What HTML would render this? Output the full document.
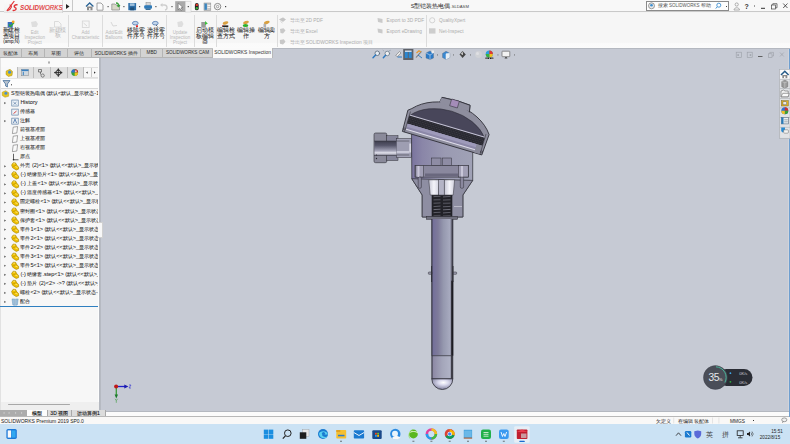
<!DOCTYPE html><html><head><meta charset="utf-8"><style>
*{margin:0;padding:0;box-sizing:border-box}
html,body{width:790px;height:444px;overflow:hidden;background:#f4f4f4;font-family:"Liberation Sans",sans-serif;position:relative;color:#333}
.a{position:absolute}
.t{position:absolute;white-space:nowrap}
#title{left:0;top:0;width:790px;height:12px;background:#f8f8f8;border-bottom:1px solid #c9c9c9}
#ribbon{left:0;top:13px;width:790px;height:35px;background:linear-gradient(#f6f6f6 0,#f6f6f6 84%,#fafafa 86%,#fbfbfb 100%)}
.sep{position:absolute;width:1px;background:#dcdcdc}
.rb{position:absolute;text-align:center;font-size:4.5px;line-height:5.8px;color:#1a1a1a;white-space:nowrap;-webkit-text-stroke:0.05px #333}
.rb.g{color:#b8b8b8;font-size:4.5px;line-height:5.1px;-webkit-text-stroke:0}
.rs{position:absolute;font-size:4.8px;line-height:5px;color:#acacac;white-space:nowrap}
#tabs{left:0;top:48px;width:273px;height:9.5px;background:#d3d3d3;border-top:1px solid #c0c0c0}
.tab{position:absolute;top:0;height:8.5px;border-right:1px solid #b4b4b4;font-size:4.65px;line-height:8.5px;text-align:center;color:#2a2a2a;white-space:nowrap;overflow:hidden}
#left{left:0;top:57.5px;width:98.8px;height:353px;background:#f7f7f7;border-left:1px solid #e2e2e2;border-right:1.2px solid #fdfdfd}
#split{left:98.8px;top:57.5px;width:2.4px;height:353px;background:linear-gradient(90deg,#b4b8c0 0,#b4b8c0 70%,#c0c4cc 100%)}
#vp{left:101px;top:48px;width:689px;height:362.5px;background:#c6cad4}
#btabs{left:0;top:410.5px;width:790px;height:6.3px;background:#fbfbfb;border-bottom:1px solid #b8b8b8;border-top:0.6px solid #b4b8c0}
#status{left:0;top:417px;width:790px;height:7px;background:#f9f8f7}
#taskbar{left:0;top:424px;width:790px;height:20px;background:#cbe2f4}
.tr{position:absolute;left:0;height:9px;font-size:5.5px;line-height:9px;color:#1a1a1a;white-space:nowrap;-webkit-text-stroke:0.05px #333}
</style></head><body>
<div id="title" class="a"></div>
<div class="a" style="left:4px;top:0;width:59px;height:14px;background:linear-gradient(#fafafa 0,#f4f4f4 70%,#dcdcdc 100%);border-right:1px solid #d6d6d6"></div>
<svg class="a" style="left:0;top:0" width="22" height="13">
<path d="M6.9 10.9 L14.3 1" stroke="#e03438" stroke-width="1.25" fill="none"/>
<path d="M9.6 5 C12.6 5 11.8 9.6 7.2 10.8" stroke="#e03438" stroke-width="1.15" fill="none"/>
<path d="M17.6 4.9 C15 4.2 12.8 6.2 15.2 7.6 C17.2 8.6 15.6 11 12.6 10.4" stroke="#e03438" stroke-width="1.35" fill="none"/>
</svg>
<div class="t" style="left:19.8px;top:4.4px;font-size:8.1px;line-height:8.5px;font-weight:bold;font-style:italic;color:#e23a3c;transform:scaleX(0.77);transform-origin:0 0">SOLID<span style="font-weight:normal;-webkit-text-stroke:0.2px #e23a3c">WORKS</span></div>
<svg class="a" style="left:66px;top:4px" width="4" height="5"><path d="M0 0 L3.5 2.5 L0 5Z" fill="#222"/></svg>
<div class="a" style="left:72px;top:0;width:1px;height:12px;background:#c8c8c8"></div>

<svg class="a" style="left:0;top:0" width="790" height="13">
<!-- home -->
<path d="M86 6.5 L89.7 3 L93.4 6.5" stroke="#2a6496" stroke-width="1.3" fill="none"/>
<rect x="87" y="6.5" width="5.5" height="3.8" fill="#8a8a8a"/><rect x="89" y="8" width="1.5" height="2.3" fill="#eee"/>
<!-- new doc -->
<path d="M97 3 L101 3 L103 5 L103 10.2 L97 10.2Z" fill="#fafafa" stroke="#8c8c8c" stroke-width="0.8"/>
<rect x="107.5" y="6" width="1.2" height="1.2" fill="#555"/>
<!-- open -->
<path d="M111.8 4 L115 4 L116 5 L119.5 5 L119.5 10 L111.8 10Z" fill="#d8d8c8" stroke="#888" stroke-width="0.7"/>
<path d="M116 3 C118 3 119 4 118.5 6.5 L117 5.5 M118.5 6.5 L120 5.3" stroke="#3aa03a" stroke-width="1.3" fill="none"/>
<rect x="123.3" y="6" width="1.2" height="1.2" fill="#555"/>
<!-- save -->
<rect x="128.3" y="3" width="7.8" height="7.3" rx="0.6" fill="#2d6ea8"/>
<rect x="129.8" y="3.3" width="4.8" height="2.6" fill="#9fc0dc"/><rect x="130.2" y="7.4" width="4" height="2.9" fill="#1f4f7a"/>
<rect x="139" y="6" width="1.2" height="1.2" fill="#555"/>
<!-- print -->
<rect x="146" y="2.6" width="4.2" height="2.6" fill="#d8d8d8" stroke="#888" stroke-width="0.5"/>
<rect x="144.2" y="5.2" width="7.8" height="3.6" rx="1" fill="#2f7ab8"/>
<rect x="145.6" y="8.4" width="5" height="1.6" fill="#3a6f9a"/>
<rect x="155.3" y="6" width="1.2" height="1.2" fill="#555"/>
<!-- undo -->
<path d="M161 5 L164.5 5 C167.5 5 168 9.5 165 10" stroke="#cfcfcf" stroke-width="1.4" fill="none"/>
<path d="M160 5 L162.5 3 L162.5 7Z" fill="#cfcfcf"/>
<rect x="171.4" y="6" width="1.2" height="1.2" fill="#555"/>
<!-- select box -->
<rect x="175.2" y="1.2" width="10.3" height="10.8" fill="#a9a9a9"/>
<rect x="185.5" y="1.2" width="5.5" height="10.8" fill="#f4f4f4" stroke="#c8c8c8" stroke-width="0.5"/>
<path d="M178.2 3 L178.2 9.8 L179.8 8.3 L181.2 10.6 L182.2 10 L181 7.8 L183 7.6Z" fill="#fff" stroke="#555" stroke-width="0.5"/>
<rect x="187.7" y="6" width="1.2" height="1.2" fill="#444"/>
<!-- traffic -->
<rect x="194.9" y="3" width="3.8" height="7.3" rx="1.9" fill="#222"/>
<circle cx="196.8" cy="4.9" r="1.2" fill="#e03a2a"/><circle cx="196.8" cy="8.3" r="1.2" fill="#3cb03c"/>
<!-- list -->
<rect x="204" y="3" width="6.8" height="7.3" fill="#c8c8c8" stroke="#888" stroke-width="0.5"/>
<rect x="204.5" y="3.5" width="2.4" height="6.3" fill="#3a86c0"/>
<rect x="207.5" y="5" width="2.8" height="0.8" fill="#fff"/><rect x="207.5" y="7.2" width="2.8" height="0.8" fill="#fff"/>
<!-- options -->
<circle cx="217.6" cy="6.6" r="3.2" fill="none" stroke="#8c8c8c" stroke-width="1"/>
<circle cx="217.6" cy="6.6" r="1.2" fill="none" stroke="#8c8c8c" stroke-width="0.8"/>
<rect x="225" y="6" width="1.2" height="1.2" fill="#444"/>
</svg>
<div class="t" style="left:410.8px;top:2.8px;font-size:5.55px;line-height:7px;color:#2a2a2a">S型铠装热电偶<span style="font-size:4.2px;color:#444">.SLDASM</span></div>
<div class="a" style="left:646px;top:1px;width:83px;height:9.6px;background:#fdfdfd;border:1px solid #8a8a8a"></div>
<svg class="a" style="left:0;top:0" width="790" height="13"><circle cx="651.5" cy="5.8" r="3" fill="#e8e8e8" stroke="#777" stroke-width="0.7"/><circle cx="651.5" cy="5.2" r="1.3" fill="#3d8fd0"/><circle cx="718.8" cy="5.2" r="2" fill="none" stroke="#3d8fd0" stroke-width="0.9"/><path d="M717.3 6.8 L715.8 8.5" stroke="#3d8fd0" stroke-width="1"/><rect x="726" y="6" width="1" height="1" fill="#444"/><circle cx="736.7" cy="4.5" r="1.6" fill="none" stroke="#999" stroke-width="0.8"/><path d="M734 10 C734 7 739.5 7 739.5 10Z" fill="none" stroke="#999" stroke-width="0.8"/><rect x="754" y="5.5" width="1" height="1" fill="#444"/><rect x="761" y="7.8" width="4" height="1" fill="#333"/><rect x="771.5" y="5" width="4" height="4" fill="none" stroke="#444" stroke-width="0.7"/><path d="M772.8 5 L772.8 3.7 L777 3.7 L777 7.8 L775.5 7.8" fill="none" stroke="#444" stroke-width="0.7"/><path d="M783.2 3.5 L787.5 8 M787.5 3.5 L783.2 8" stroke="#333" stroke-width="0.8"/></svg>
<div class="t" style="left:657.5px;top:2.2px;font-size:5.2px;line-height:7px;color:#555">搜索 <span style="font-size:4.5px">SOLIDWORKS</span> 帮助</div>
<div class="t" style="left:744.5px;top:1.5px;font-size:7px;line-height:9px;font-weight:bold;color:#333">?</div>
<div id="ribbon" class="a"></div>
<div class="sep" style="left:68.4px;top:15px;height:32px"></div>
<div class="sep" style="left:102.3px;top:15px;height:32px"></div>
<div class="sep" style="left:166.4px;top:15px;height:32px"></div>
<div class="sep" style="left:194.0px;top:15px;height:32px"></div>
<div class="sep" style="left:215.5px;top:15px;height:32px"></div>
<div class="sep" style="left:276.8px;top:15px;height:32px"></div>
<div class="sep" style="left:426.3px;top:15px;height:32px"></div>
<div class="rb" style="left:-3.7px;top:27.8px;width:30px"><span style="font-size:5.7px;letter-spacing:-0.25px;">新建检</span><br><span style="font-size:5.7px;letter-spacing:-0.25px;">查项目</span><br>(amp;N)</div>
<div class="rb g" style="left:19.7px;top:29.6px;width:30px">Edit<br>Inspection<br>Project</div>
<div class="rb g" style="left:42.6px;top:27.8px;width:30px"><span style="font-size:5.7px;letter-spacing:-0.25px;">新建模</span><br><span style="font-size:5.7px;letter-spacing:-0.25px;">板</span></div>
<div class="rb g" style="left:70.5px;top:29.6px;width:30px">Add<br>Characteristic</div>
<div class="rb g" style="left:99.0px;top:29.6px;width:30px">Add/Edit<br>Balloons</div>
<div class="rb" style="left:120.7px;top:27.8px;width:30px"><span style="font-size:5.7px;letter-spacing:-0.25px;">移除零</span><br><span style="font-size:5.7px;letter-spacing:-0.25px;">件序号</span></div>
<div class="rb" style="left:140.8px;top:27.8px;width:30px"><span style="font-size:5.7px;letter-spacing:-0.25px;">选择零</span><br><span style="font-size:5.7px;letter-spacing:-0.25px;">件序号</span></div>
<div class="rb g" style="left:165.1px;top:29.6px;width:30px">Update<br>Inspection<br>Project</div>
<div class="rb" style="left:189.7px;top:27.8px;width:30px"><span style="font-size:5.7px;letter-spacing:-0.25px;">启动模</span><br><span style="font-size:5.7px;letter-spacing:-0.25px;">板编辑</span><br><span style="font-size:5.7px;letter-spacing:-0.25px;">器</span></div>
<div class="rb" style="left:211.1px;top:27.8px;width:30px"><span style="font-size:5.7px;letter-spacing:-0.25px;">编辑检</span><br><span style="font-size:5.7px;letter-spacing:-0.25px;">查方式</span></div>
<div class="rb" style="left:231.1px;top:27.8px;width:30px"><span style="font-size:5.7px;letter-spacing:-0.25px;">编辑操</span><br><span style="font-size:5.7px;letter-spacing:-0.25px;">作</span></div>
<div class="rb" style="left:251.4px;top:27.8px;width:30px"><span style="font-size:5.7px;letter-spacing:-0.25px;">编辑卖</span><br><span style="font-size:5.7px;letter-spacing:-0.25px;">方</span></div>
<svg class="a" style="left:0;top:0" width="790" height="48">
<!-- new inspection -->
<rect x="7.7" y="22" width="5" height="5.5" fill="#3a6cc0"/><path d="M9 24.5 L10.6 26.5 L14 22.6" stroke="#2fa83a" stroke-width="1.4" fill="none"/><circle cx="13.2" cy="21.8" r="1.4" fill="#f0a020"/>
<!-- edit proj gray -->
<path d="M31 22 L36 21 L38 24 L36.5 27 L32 27Z" fill="#dedede"/>
<path d="M54.5 21.5 L58.5 21.5 L61 24 L61 27 L54.5 27Z" fill="none" stroke="#d4d4d4" stroke-width="0.8"/>
<rect x="82.3" y="21" width="6.8" height="6.5" fill="none" stroke="#d4d4d4" stroke-width="0.8"/><path d="M83.5 23 L87 26" stroke="#d0d0d0" stroke-width="0.8"/>
<path d="M111 22 L113 26 L117 25.5" stroke="#d8d8d8" stroke-width="1" fill="none"/>
<!-- remove balloon -->
<ellipse cx="135.3" cy="23.2" rx="2.9" ry="1.8" fill="#c4d6ea" stroke="#3a68a8" stroke-width="0.7"/><rect x="136" y="25.3" width="2" height="1.8" fill="#e82020"/>
<ellipse cx="155.3" cy="23.2" rx="2.9" ry="1.8" fill="#c4d6ea" stroke="#3a68a8" stroke-width="0.7"/><path d="M156 25 L157.5 26.5" stroke="#333" stroke-width="0.7"/>
<path d="M177.3 22 L182 21 L183.5 24 L182 27 L178 27Z" fill="#dedede"/>
<!-- template editor -->
<rect x="201.3" y="22" width="4.5" height="5.5" fill="#9a9a9a"/><path d="M205 21 L207.8 23.5 L205 25Z" fill="#3cc03c"/>
<!-- edit inspection method -->
<ellipse cx="225.5" cy="23" rx="3" ry="1.5" fill="#d9a040" transform="rotate(-20 225.5 23)"/><rect x="222.3" y="25.4" width="6" height="1.6" fill="#222"/><rect x="222" y="25" width="1" height="1" fill="#e06060"/>
<ellipse cx="246" cy="22.5" rx="3" ry="1.5" fill="#d9a040" transform="rotate(-20 246 22.5)"/><ellipse cx="245.5" cy="25.5" rx="2.8" ry="1.6" fill="#2db02d"/>
<ellipse cx="266.8" cy="22.5" rx="3" ry="1.5" fill="#d9a040" transform="rotate(-20 266.8 22.5)"/><rect x="263.5" y="23.8" width="2.6" height="3.5" fill="#b0b0b0"/>
<!-- small gray icons -->
<path d="M279.5 19.5 L283 17.8 L285.5 19.5 L283 21.5 Z M280.5 21.5 L282.5 23" fill="#c4c4c4" stroke="#c0c0c0" stroke-width="0.6"/>
<path d="M280 29 L283.5 28.3 L285.5 30.5 L283 33.5 L280.5 33 Z" fill="#c8c8c8"/>
<path d="M279.8 40 L283.8 39.2 L285.5 41.8 L283 44.5 L280 43.8 Z" fill="#c8c8c8"/>
<path d="M377.5 18 L382.5 19 L382.5 23 L378 22Z" fill="#cacaca"/>
<path d="M377.5 28.5 L382.5 29.5 L382.5 33.5 L378 32.5Z" fill="#cacaca"/>
<circle cx="432.2" cy="20.3" r="2.6" fill="none" stroke="#d4d4d4" stroke-width="1"/>
<rect x="429" y="28.3" width="6.5" height="5.3" fill="#cdcdcd"/>
</svg>
<div class="rs" style="left:289.5px;top:18.1px"><span style="font-size:5.0px;">导出至</span> 2D PDF</div>
<div class="rs" style="left:289.5px;top:28.9px"><span style="font-size:5.0px;">导出至</span> Excel</div>
<div class="rs" style="left:289.5px;top:39.6px"><span style="font-size:5.0px;">导出至</span> SOLIDWORKS Inspection <span style="font-size:5.0px;">项目</span></div>
<div class="rs" style="left:386.5px;top:18.1px">Export to 3D PDF</div>
<div class="rs" style="left:386.5px;top:28.9px">Export eDrawing</div>
<div class="rs" style="left:439px;top:18.1px">QualityXpert</div>
<div class="rs" style="left:439px;top:28.9px">Net-Inspect</div>
<div id="vp" class="a"></div>
<div class="a" style="left:787.9px;top:48px;width:1px;height:362.5px;background:#d0d4dc"></div>
<div class="a" style="left:788.9px;top:48px;width:1.1px;height:362.5px;background:#6f9fd0"></div>
<div class="a" style="left:273px;top:48px;width:517px;height:1px;background:linear-gradient(#acb0b8,#bcc0c8)"></div>
<div id="tabs" class="a">
<div class="tab" style="left:0.0px;width:22.3px"><span style="font-size:5.0px;">装配体</span></div>
<div class="tab" style="left:22.3px;width:22.7px"><span style="font-size:5.0px;">布局</span></div>
<div class="tab" style="left:45.0px;width:22.8px"><span style="font-size:5.0px;">草图</span></div>
<div class="tab" style="left:67.8px;width:24.0px"><span style="font-size:5.0px;">评估</span></div>
<div class="tab" style="left:91.8px;width:49.7px">SOLIDWORKS <span style="font-size:5.0px;">插件</span></div>
<div class="tab" style="left:141.5px;width:21.5px">MBD</div>
<div class="tab" style="left:163.0px;width:50.0px">SOLIDWORKS CAM</div>
</div>
<div class="a" style="left:0;top:56.8px;width:213px;height:0.8px;background:#b4b4b4"></div>
<div class="a" style="left:213px;top:48px;width:60.2px;height:9.5px;background:#fafafa;border-right:1px solid #b8b8b8;font-size:4.9px;line-height:9.5px;text-align:center;color:#333;white-space:nowrap">SOLIDWORKS Inspection</div>
<div id="left" class="a"></div>
<div id="split" class="a"></div>
<div class="a" style="left:1px;top:57.5px;width:97px;height:9.3px;background:#fafafa"></div>
<div class="a" style="left:47.8px;top:61.3px;width:2.6px;height:2.6px;border-radius:50%;border:0.6px solid #b0b0b0"></div>
<div class="a" style="left:1px;top:66.5px;width:97px;height:0.8px;background:#cfcfcf"></div>
<div class="a" style="left:1px;top:67.2px;width:97px;height:10.8px;background:#e0e0e0"></div>
<div class="a" style="left:1px;top:67.2px;width:16px;height:11px;background:#f9f9f9"></div>
<div class="a" style="left:17.1px;top:67.2px;width:0.8px;height:10.8px;background:#bdbdbd"></div>
<div class="a" style="left:32.9px;top:67.2px;width:0.8px;height:10.8px;background:#bdbdbd"></div>
<div class="a" style="left:49.9px;top:67.2px;width:0.8px;height:10.8px;background:#bdbdbd"></div>
<div class="a" style="left:66.6px;top:67.2px;width:0.8px;height:10.8px;background:#bdbdbd"></div>
<div class="a" style="left:82.8px;top:67.2px;width:0.8px;height:10.8px;background:#bdbdbd"></div>
<div class="a" style="left:83.5px;top:68px;width:14px;height:9px;background:#f8f8f8"></div>
<div class="a" style="left:90.6px;top:68px;width:0.6px;height:9px;background:#c8c8c8"></div>
<svg class="a" style="left:0;top:0" width="100" height="100">
<path d="M6.2 71 L10 69.3 L12.5 71.5 L12 75.5 L8.5 76.5 L6 74.5Z" fill="#e6c21e" stroke="#a48a10" stroke-width="0.5"/>
<circle cx="9.6" cy="72.2" r="1.6" fill="#4a90d0"/>
<rect x="21.5" y="69.5" width="7" height="6.3" fill="#cfd8e0" stroke="#777" stroke-width="0.4"/>
<rect x="21.5" y="69.5" width="7" height="1.6" fill="#3a80c0"/>
<rect x="22.8" y="71.8" width="1" height="3.5" fill="#3a80c0"/>
<path d="M38.5 69.5 L41.5 69.5 L41.5 72 L38.5 72Z M40.5 72 L40.5 74.5 M41.5 74.5 A1.6 1.6 0 1 0 41.6 74.4" fill="none" stroke="#555" stroke-width="0.7"/>
<circle cx="58.3" cy="72.6" r="2.4" fill="none" stroke="#222" stroke-width="0.9"/>
<path d="M58.3 69 L58.3 76.2 M54.7 72.6 L61.9 72.6" stroke="#222" stroke-width="0.9"/>
<path d="M57.4 69.6 L58.3 68.6 L59.2 69.6 M57.4 75.6 L58.3 76.6 L59.2 75.6 M55.3 71.7 L54.3 72.6 L55.3 73.5 M61.3 71.7 L62.3 72.6 L61.3 73.5" fill="#222" stroke="#222" stroke-width="0.5"/>
<circle cx="74.7" cy="72.6" r="3.4" fill="#3aa03a"/>
<path d="M74.7 72.6 L74.7 69.2 A3.4 3.4 0 0 1 78.1 72.6Z" fill="#d02020"/>
<path d="M74.7 72.6 L78.1 72.6 A3.4 3.4 0 0 1 74.7 76Z" fill="#f0c020"/>
<path d="M74.7 72.6 L71.3 72.6 A3.4 3.4 0 0 1 74.7 69.2Z" fill="#3070d0"/>
<circle cx="75.8" cy="71.2" r="1" fill="#fff" opacity="0.7"/>
<path d="M87.7 71.5 L86 72.6 L87.7 73.7Z" fill="#333"/>
<path d="M94 71.5 L95.7 72.6 L94 73.7Z" fill="#333"/>
<!-- filter -->
<path d="M3 80.6 L10 80.6 L7.4 84 L7.4 87 L5.6 86 L5.6 84Z" fill="#b8c4d0" stroke="#2f5f90" stroke-width="0.6"/>
<rect x="11" y="84.3" width="1" height="1" fill="#333"/>
</svg>
<div class="a" style="left:1px;top:78px;width:97px;height:10.5px;background:#fdfdfd;border-bottom:0.6px solid #d8d8d8;border-top:0.6px solid #e6e6e6"></div>
<svg class="a" style="left:0;top:0" width="100" height="100"><path d="M3 80.6 L10 80.6 L7.4 84 L7.4 87 L5.6 86 L5.6 84Z" fill="#b8c4d0" stroke="#2f5f90" stroke-width="0.7"/><rect x="11" y="84.3" width="1" height="1" fill="#333"/></svg>
<div class="a" style="left:0;top:88.5px;width:98px;height:320px;overflow:hidden">
<div class="tr" style="left:11.0px;top:0.50px">S<span style="font-size:5.0px;">型铠装热电偶</span>  (<span style="font-size:5.0px;">默认</span>&lt;<span style="font-size:5.0px;">默认</span>_<span style="font-size:5.0px;">显示状态</span>-1&gt;)</div>
<div class="tr" style="left:20.4px;top:9.54px">History</div>
<div class="tr" style="left:20.4px;top:18.58px"><span style="font-size:5.0px;">传感器</span></div>
<div class="tr" style="left:20.4px;top:27.62px"><span style="font-size:5.0px;">注解</span></div>
<div class="tr" style="left:20.4px;top:36.66px"><span style="font-size:5.0px;">前视基准面</span></div>
<div class="tr" style="left:20.4px;top:45.70px"><span style="font-size:5.0px;">上视基准面</span></div>
<div class="tr" style="left:20.4px;top:54.74px"><span style="font-size:5.0px;">右视基准面</span></div>
<div class="tr" style="left:20.4px;top:63.78px"><span style="font-size:5.0px;">原点</span></div>
<div class="tr" style="left:20.4px;top:72.82px"><span style="font-size:5.0px;">外壳</span> (2)&lt;1&gt; (<span style="font-size:5.0px;">默认</span>&lt;&lt;<span style="font-size:5.0px;">默认</span>&gt;_<span style="font-size:5.0px;">显示状态</span>-1&gt;)</div>
<div class="tr" style="left:20.4px;top:81.86px">(-) <span style="font-size:5.0px;">绝缘垫片</span>&lt;1&gt; (<span style="font-size:5.0px;">默认</span>&lt;&lt;<span style="font-size:5.0px;">默认</span>&gt;_<span style="font-size:5.0px;">显示状态</span>-1&gt;)</div>
<div class="tr" style="left:20.4px;top:90.90px">(-) <span style="font-size:5.0px;">上盖</span>&lt;1&gt; (<span style="font-size:5.0px;">默认</span>&lt;&lt;<span style="font-size:5.0px;">默认</span>&gt;_<span style="font-size:5.0px;">显示状态</span>-1&gt;)</div>
<div class="tr" style="left:20.4px;top:99.94px">(-) <span style="font-size:5.0px;">温度传感器</span>&lt;1&gt; (<span style="font-size:5.0px;">默认</span>&lt;&lt;<span style="font-size:5.0px;">默认</span>&gt;_<span style="font-size:5.0px;">显示状态</span>-1&gt;)</div>
<div class="tr" style="left:20.4px;top:108.98px"><span style="font-size:5.0px;">固定螺栓</span>&lt;1&gt; (<span style="font-size:5.0px;">默认</span>&lt;&lt;<span style="font-size:5.0px;">默认</span>&gt;_<span style="font-size:5.0px;">显示状态</span>-1&gt;)</div>
<div class="tr" style="left:20.4px;top:118.02px"><span style="font-size:5.0px;">密封圈</span>&lt;1&gt; (<span style="font-size:5.0px;">默认</span>&lt;&lt;<span style="font-size:5.0px;">默认</span>&gt;_<span style="font-size:5.0px;">显示状态</span>-1&gt;)</div>
<div class="tr" style="left:20.4px;top:127.06px"><span style="font-size:5.0px;">保护套</span>&lt;1&gt; (<span style="font-size:5.0px;">默认</span>&lt;&lt;<span style="font-size:5.0px;">默认</span>&gt;_<span style="font-size:5.0px;">显示状态</span>-1&gt;)</div>
<div class="tr" style="left:20.4px;top:136.10px"><span style="font-size:5.0px;">零件</span>1&lt;1&gt; (<span style="font-size:5.0px;">默认</span>&lt;&lt;<span style="font-size:5.0px;">默认</span>&gt;_<span style="font-size:5.0px;">显示状态</span>-1&gt;)</div>
<div class="tr" style="left:20.4px;top:145.14px"><span style="font-size:5.0px;">零件</span>2&lt;1&gt; (<span style="font-size:5.0px;">默认</span>&lt;&lt;<span style="font-size:5.0px;">默认</span>&gt;_<span style="font-size:5.0px;">显示状态</span>-1&gt;)</div>
<div class="tr" style="left:20.4px;top:154.18px"><span style="font-size:5.0px;">零件</span>2&lt;2&gt; (<span style="font-size:5.0px;">默认</span>&lt;&lt;<span style="font-size:5.0px;">默认</span>&gt;_<span style="font-size:5.0px;">显示状态</span>-1&gt;)</div>
<div class="tr" style="left:20.4px;top:163.22px"><span style="font-size:5.0px;">零件</span>3&lt;1&gt; (<span style="font-size:5.0px;">默认</span>&lt;&lt;<span style="font-size:5.0px;">默认</span>&gt;_<span style="font-size:5.0px;">显示状态</span>-1&gt;)</div>
<div class="tr" style="left:20.4px;top:172.26px"><span style="font-size:5.0px;">零件</span>5&lt;1&gt; (<span style="font-size:5.0px;">默认</span>&lt;&lt;<span style="font-size:5.0px;">默认</span>&gt;_<span style="font-size:5.0px;">显示状态</span>-1&gt;)</div>
<div class="tr" style="left:20.4px;top:181.30px">(-) <span style="font-size:5.0px;">绝缘套</span>.step&lt;1&gt; (<span style="font-size:5.0px;">默认</span>&lt;&lt;<span style="font-size:5.0px;">默认</span>&gt;_<span style="font-size:5.0px;">显示状态</span>-1&gt;)</div>
<div class="tr" style="left:20.4px;top:190.34px">(-) <span style="font-size:5.0px;">垫片</span> (2)&lt;2&gt; -&gt;? (<span style="font-size:5.0px;">默认</span>&lt;&lt;<span style="font-size:5.0px;">默认</span>&gt;_<span style="font-size:5.0px;">显示状态</span>-1&gt;)</div>
<div class="tr" style="left:20.4px;top:199.38px"><span style="font-size:5.0px;">螺栓</span>&lt;2&gt; (<span style="font-size:5.0px;">默认</span>&lt;&lt;<span style="font-size:5.0px;">默认</span>&gt;_<span style="font-size:5.0px;">显示状态</span>-1&gt;)</div>
<div class="tr" style="left:20.4px;top:208.42px"><span style="font-size:5.0px;">配合</span></div>
<svg class="a" style="left:0;top:0" width="98" height="320"><path d="M2.2 3.20 L5.6 1.70 L8.8 3.70 L8.6 7.30 L5 8.30 L2.2 6.50 Z" fill="#e8c420" stroke="#a08a10" stroke-width="0.4"/><circle cx="5.9" cy="4.20" r="1.5" fill="#4a90d0"/><path d="M4.3 12.94 L6 14.04 L4.3 15.14 Z" fill="#444"/><rect x="11.8" y="11.04" width="6.4" height="6" fill="#eef4fa" stroke="#4a6f98" stroke-width="0.6"/><path d="M13.3 13.04 L16.5 15.54 M13.5 15.54 L16.5 13.04" stroke="#4a6f98" stroke-width="0.6"/><rect x="11.8" y="20.08" width="6.4" height="6" fill="#eef2f6" stroke="#4a6f98" stroke-width="0.6"/><path d="M13.5 24.58 L16.5 22.08" stroke="#d03030" stroke-width="0.9"/><path d="M4.3 31.02 L6 32.12 L4.3 33.22 Z" fill="#444"/><rect x="11.8" y="29.12" width="6.4" height="6" fill="#eef2f6" stroke="#4a6f98" stroke-width="0.6"/><path d="M13.4 34.12 L15 30.12 L16.6 34.12" stroke="#2a5a9a" stroke-width="0.7" fill="none"/><path d="M13.2 38.16 L17.6 37.56 L16.8 43.96 L12.4 44.56 Z" fill="#fafafa" stroke="#555" stroke-width="0.5"/><path d="M13.2 47.20 L17.6 46.60 L16.8 53.00 L12.4 53.60 Z" fill="#fafafa" stroke="#555" stroke-width="0.5"/><path d="M13.2 56.24 L17.6 55.64 L16.8 62.04 L12.4 62.64 Z" fill="#fafafa" stroke="#555" stroke-width="0.5"/><path d="M13.5 64.78 L13.5 70.78 L18.5 70.78" stroke="#222" stroke-width="0.7" fill="none"/><circle cx="13.5" cy="70.78" r="0.8" fill="#222"/><path d="M4.3 76.22 L6 77.32 L4.3 78.42 Z" fill="#444"/><path d="M11.6 76.02 L13.2 73.72 L15.6 73.92 L16.6 76.02 L18.6 77.92 L18.6 80.12 L16.2 81.02 L12.6 78.72 Z" fill="#f0c000" stroke="#a08000" stroke-width="0.6" stroke-linejoin="round"/><path d="M13.3 74.72 L15 74.72 M15.2 77.52 L17.6 78.52" stroke="#fff0a0" stroke-width="0.7"/><path d="M13 77.52 L16.6 76.12" stroke="#a08000" stroke-width="0.45"/><path d="M4.3 85.26 L6 86.36 L4.3 87.46 Z" fill="#444"/><path d="M11.6 85.06 L13.2 82.76 L15.6 82.96 L16.6 85.06 L18.6 86.96 L18.6 89.16 L16.2 90.06 L12.6 87.76 Z" fill="#f0c000" stroke="#a08000" stroke-width="0.6" stroke-linejoin="round"/><path d="M13.3 83.76 L15 83.76 M15.2 86.56 L17.6 87.56" stroke="#fff0a0" stroke-width="0.7"/><path d="M13 86.56 L16.6 85.16" stroke="#a08000" stroke-width="0.45"/><path d="M4.3 94.30 L6 95.40 L4.3 96.50 Z" fill="#444"/><path d="M11.6 94.10 L13.2 91.80 L15.6 92.00 L16.6 94.10 L18.6 96.00 L18.6 98.20 L16.2 99.10 L12.6 96.80 Z" fill="#f0c000" stroke="#a08000" stroke-width="0.6" stroke-linejoin="round"/><path d="M13.3 92.80 L15 92.80 M15.2 95.60 L17.6 96.60" stroke="#fff0a0" stroke-width="0.7"/><path d="M13 95.60 L16.6 94.20" stroke="#a08000" stroke-width="0.45"/><path d="M4.3 103.34 L6 104.44 L4.3 105.54 Z" fill="#444"/><path d="M11.6 103.14 L13.2 100.84 L15.6 101.04 L16.6 103.14 L18.6 105.04 L18.6 107.24 L16.2 108.14 L12.6 105.84 Z" fill="#f0c000" stroke="#a08000" stroke-width="0.6" stroke-linejoin="round"/><path d="M13.3 101.84 L15 101.84 M15.2 104.64 L17.6 105.64" stroke="#fff0a0" stroke-width="0.7"/><path d="M13 104.64 L16.6 103.24" stroke="#a08000" stroke-width="0.45"/><path d="M4.3 112.38 L6 113.48 L4.3 114.58 Z" fill="#444"/><path d="M11.6 112.18 L13.2 109.88 L15.6 110.08 L16.6 112.18 L18.6 114.08 L18.6 116.28 L16.2 117.18 L12.6 114.88 Z" fill="#f0c000" stroke="#a08000" stroke-width="0.6" stroke-linejoin="round"/><path d="M13.3 110.88 L15 110.88 M15.2 113.68 L17.6 114.68" stroke="#fff0a0" stroke-width="0.7"/><path d="M13 113.68 L16.6 112.28" stroke="#a08000" stroke-width="0.45"/><path d="M4.3 121.42 L6 122.52 L4.3 123.62 Z" fill="#444"/><path d="M11.6 121.22 L13.2 118.92 L15.6 119.12 L16.6 121.22 L18.6 123.12 L18.6 125.32 L16.2 126.22 L12.6 123.92 Z" fill="#f0c000" stroke="#a08000" stroke-width="0.6" stroke-linejoin="round"/><path d="M13.3 119.92 L15 119.92 M15.2 122.72 L17.6 123.72" stroke="#fff0a0" stroke-width="0.7"/><path d="M13 122.72 L16.6 121.32" stroke="#a08000" stroke-width="0.45"/><path d="M4.3 130.46 L6 131.56 L4.3 132.66 Z" fill="#444"/><path d="M11.6 130.26 L13.2 127.96 L15.6 128.16 L16.6 130.26 L18.6 132.16 L18.6 134.36 L16.2 135.26 L12.6 132.96 Z" fill="#f0c000" stroke="#a08000" stroke-width="0.6" stroke-linejoin="round"/><path d="M13.3 128.96 L15 128.96 M15.2 131.76 L17.6 132.76" stroke="#fff0a0" stroke-width="0.7"/><path d="M13 131.76 L16.6 130.36" stroke="#a08000" stroke-width="0.45"/><path d="M4.3 139.50 L6 140.60 L4.3 141.70 Z" fill="#444"/><path d="M11.6 139.30 L13.2 137.00 L15.6 137.20 L16.6 139.30 L18.6 141.20 L18.6 143.40 L16.2 144.30 L12.6 142.00 Z" fill="#f0c000" stroke="#a08000" stroke-width="0.6" stroke-linejoin="round"/><path d="M13.3 138.00 L15 138.00 M15.2 140.80 L17.6 141.80" stroke="#fff0a0" stroke-width="0.7"/><path d="M13 140.80 L16.6 139.40" stroke="#a08000" stroke-width="0.45"/><path d="M4.3 148.54 L6 149.64 L4.3 150.74 Z" fill="#444"/><path d="M11.6 148.34 L13.2 146.04 L15.6 146.24 L16.6 148.34 L18.6 150.24 L18.6 152.44 L16.2 153.34 L12.6 151.04 Z" fill="#f0c000" stroke="#a08000" stroke-width="0.6" stroke-linejoin="round"/><path d="M13.3 147.04 L15 147.04 M15.2 149.84 L17.6 150.84" stroke="#fff0a0" stroke-width="0.7"/><path d="M13 149.84 L16.6 148.44" stroke="#a08000" stroke-width="0.45"/><path d="M4.3 157.58 L6 158.68 L4.3 159.78 Z" fill="#444"/><path d="M11.6 157.38 L13.2 155.08 L15.6 155.28 L16.6 157.38 L18.6 159.28 L18.6 161.48 L16.2 162.38 L12.6 160.08 Z" fill="#f0c000" stroke="#a08000" stroke-width="0.6" stroke-linejoin="round"/><path d="M13.3 156.08 L15 156.08 M15.2 158.88 L17.6 159.88" stroke="#fff0a0" stroke-width="0.7"/><path d="M13 158.88 L16.6 157.48" stroke="#a08000" stroke-width="0.45"/><path d="M4.3 166.62 L6 167.72 L4.3 168.82 Z" fill="#444"/><path d="M11.6 166.42 L13.2 164.12 L15.6 164.32 L16.6 166.42 L18.6 168.32 L18.6 170.52 L16.2 171.42 L12.6 169.12 Z" fill="#f0c000" stroke="#a08000" stroke-width="0.6" stroke-linejoin="round"/><path d="M13.3 165.12 L15 165.12 M15.2 167.92 L17.6 168.92" stroke="#fff0a0" stroke-width="0.7"/><path d="M13 167.92 L16.6 166.52" stroke="#a08000" stroke-width="0.45"/><path d="M4.3 175.66 L6 176.76 L4.3 177.86 Z" fill="#444"/><path d="M11.6 175.46 L13.2 173.16 L15.6 173.36 L16.6 175.46 L18.6 177.36 L18.6 179.56 L16.2 180.46 L12.6 178.16 Z" fill="#f0c000" stroke="#a08000" stroke-width="0.6" stroke-linejoin="round"/><path d="M13.3 174.16 L15 174.16 M15.2 176.96 L17.6 177.96" stroke="#fff0a0" stroke-width="0.7"/><path d="M13 176.96 L16.6 175.56" stroke="#a08000" stroke-width="0.45"/><path d="M4.3 184.70 L6 185.80 L4.3 186.90 Z" fill="#444"/><path d="M11.6 184.50 L13.2 182.20 L15.6 182.40 L16.6 184.50 L18.6 186.40 L18.6 188.60 L16.2 189.50 L12.6 187.20 Z" fill="#f0c000" stroke="#a08000" stroke-width="0.6" stroke-linejoin="round"/><path d="M13.3 183.20 L15 183.20 M15.2 186.00 L17.6 187.00" stroke="#fff0a0" stroke-width="0.7"/><path d="M13 186.00 L16.6 184.60" stroke="#a08000" stroke-width="0.45"/><path d="M4.3 193.74 L6 194.84 L4.3 195.94 Z" fill="#444"/><path d="M11.6 193.54 L13.2 191.24 L15.6 191.44 L16.6 193.54 L18.6 195.44 L18.6 197.64 L16.2 198.54 L12.6 196.24 Z" fill="#f0c000" stroke="#a08000" stroke-width="0.6" stroke-linejoin="round"/><path d="M13.3 192.24 L15 192.24 M15.2 195.04 L17.6 196.04" stroke="#fff0a0" stroke-width="0.7"/><path d="M13 195.04 L16.6 193.64" stroke="#a08000" stroke-width="0.45"/><path d="M4.3 202.78 L6 203.88 L4.3 204.98 Z" fill="#444"/><path d="M11.6 202.58 L13.2 200.28 L15.6 200.48 L16.6 202.58 L18.6 204.48 L18.6 206.68 L16.2 207.58 L12.6 205.28 Z" fill="#f0c000" stroke="#a08000" stroke-width="0.6" stroke-linejoin="round"/><path d="M13.3 201.28 L15 201.28 M15.2 204.08 L17.6 205.08" stroke="#fff0a0" stroke-width="0.7"/><path d="M13 204.08 L16.6 202.68" stroke="#a08000" stroke-width="0.45"/><path d="M4.3 211.82 L6 212.92 L4.3 214.02 Z" fill="#444"/><path d="M12 209.92 L14.6 209.92 L14.6 216.42 L12.8 215.92 Z M15.6 209.92 L18.2 209.92 L17.4 215.92 L15.6 216.42 Z" fill="#9cc0dc" stroke="#5a88b0" stroke-width="0.4"/></svg>
</div>
<div class="a" style="left:0;top:305.8px;width:98px;height:1.4px;background:#2f7fc0"></div>
<div class="a" style="left:98px;top:221.5px;width:5px;height:16px;background:#f8f8f8;border:0.5px solid #d0d0d0;border-left:none"></div>
<div class="a" style="left:1px;top:402.3px;width:97.8px;height:7.6px;background:#efefef"></div>
<div class="a" style="left:7.7px;top:404px;width:62.6px;height:1.2px;background:#a8a8a8;border-radius:1px"></div>
<svg class="a" style="left:0;top:0" width="790" height="444">
<g stroke-linecap="round">
<circle cx="377.3" cy="53.3" r="2.3" fill="#e8eef4" stroke="#5a6a7a" stroke-width="0.8"/><path d="M375.6 55 L373 57.8" stroke="#2a78c0" stroke-width="1.4"/>
<circle cx="387.3" cy="53.5" r="2.3" fill="#f0f0f0" stroke="#6a7a8a" stroke-width="0.8"/><path d="M385.6 55.2 L383.3 57.8" stroke="#2a78c0" stroke-width="1.4"/>
<path d="M389 50.8 L390.5 50.3 M383.8 51 L383 50.3" stroke="#7a8a9a" stroke-width="0.5"/>
<path d="M396 55 L399.5 51.5 L401 53 L397.5 56.5Z" fill="#e8e8e8" stroke="#666" stroke-width="0.5"/><path d="M401.5 57 L398 57" stroke="#2a78c0" stroke-width="1.2"/>
</g>
<rect x="403.2" y="49" width="10.2" height="11" fill="#5e6168"/>
<rect x="404.8" y="51.2" width="3" height="6.8" fill="#2a86d0"/><rect x="408.7" y="51.8" width="3" height="6.2" fill="#2a86d0"/><rect x="405" y="50.5" width="6.6" height="1.5" fill="#c8d8e8"/>
<path d="M416 57.5 L421.5 51.5" stroke="#777" stroke-width="1.1"/><path d="M416.5 53 L419 50.8 L421 52" stroke="#e89a30" stroke-width="1.3" fill="none"/><path d="M418 55 L422 58" stroke="#2a78c0" stroke-width="0.9"/>
<path d="M426 53 L430 51 L433.5 53 L433.5 58 L430 59.5 L426 58Z" fill="#2a7ac8" stroke="#5a6a80" stroke-width="0.4"/><path d="M426 53 L430 55 L433.5 53 M430 55 L430 59.5" stroke="#d8e4f0" stroke-width="0.6" fill="none"/><rect x="431.5" y="50.5" width="2.5" height="2.5" fill="#eaeaea"/>
<rect x="437" y="54.5" width="0.9" height="0.9" fill="#555"/>
<path d="M442.5 53.5 L446 51.3 L449.8 53.3 L449.8 57.5 L446 59.5 L442.5 57.5Z" fill="#3a88d0" stroke="#5a6a80" stroke-width="0.4"/><path d="M446 53.8 L449.8 53.3 M446 53.8 L446 59.5" stroke="#fff" stroke-width="0.5" fill="none"/><path d="M446 53.8 L449.8 53.3 L449.8 57.5 L446 59.5Z" fill="#e8eef4"/>
<rect x="453" y="54.5" width="0.9" height="0.9" fill="#555"/>
<path d="M459.5 54.5 L462.5 51 L465.8 54.5 L462.5 58Z" fill="#444"/><path d="M459.5 54.5 L462.5 58 L461 56Z" fill="#fff"/><path d="M461 54 L462.5 51.5 L463 55Z" fill="#eee"/>
<rect x="470" y="54.5" width="0.9" height="0.9" fill="#555"/>
<circle cx="478.5" cy="54.5" r="3.4" fill="#d0d2d6"/><circle cx="477.5" cy="53.5" r="1.5" fill="#dfe0e3"/>
<circle cx="489.3" cy="54" r="3.6" fill="#2aa0e0"/><path d="M489.3 54 L489.3 50.4 A3.6 3.6 0 0 1 492.9 54Z" fill="#e03a30"/><path d="M489.3 54 L492.9 54 A3.6 3.6 0 0 1 489.3 57.6Z" fill="#f0c020"/><path d="M489.3 54 L485.7 54 A3.6 3.6 0 0 0 489.3 57.6Z" fill="#3ab040"/>
<rect x="485.5" y="57.5" width="7.8" height="1.5" fill="#222"/><rect x="486.5" y="57.8" width="1" height="0.8" fill="#fff"/><rect x="489" y="57.8" width="1" height="0.8" fill="#fff"/><rect x="491.5" y="57.8" width="1" height="0.8" fill="#fff"/>
<rect x="497.5" y="54.5" width="0.9" height="0.9" fill="#555"/>
<rect x="502" y="51.2" width="7.8" height="5.5" rx="0.6" fill="#f2f2f2" stroke="#666" stroke-width="0.7"/><path d="M504.5 58.5 L507.5 58.5 L506.5 57 L505.5 57Z" fill="#444"/>
<rect x="514" y="54.5" width="0.9" height="0.9" fill="#555"/>


<rect x="736.2" y="52.2" width="5.3" height="5.3" fill="none" stroke="#9a9ea6" stroke-width="0.6"/><rect x="737.4" y="54.3" width="1.5" height="1.5" fill="#9a9ea6"/>
<rect x="747.2" y="52.2" width="5" height="5.3" fill="none" stroke="#9a9ea6" stroke-width="0.6"/><rect x="749.7" y="54.3" width="1.5" height="1.5" fill="#9a9ea6"/>
<rect x="758" y="56" width="4.5" height="0.9" fill="#555"/>
<rect x="768.4" y="53.8" width="3.6" height="3.6" fill="none" stroke="#9a9ea6" stroke-width="0.6"/><path d="M769.8 53.8 L769.8 52.4 L773.5 52.4 L773.5 56 L772 56" fill="none" stroke="#9a9ea6" stroke-width="0.6"/>
<path d="M780 52.5 L783.8 56.5 M783.8 52.5 L780 56.5" stroke="#9a9ea6" stroke-width="0.6"/>

<rect x="779.4" y="69.5" width="10.6" height="69" fill="#d4d6da" stroke="#a8acb2" stroke-width="0.6"/>
<rect x="779.8" y="69.6" width="10.2" height="9.6" fill="#fbfbfb" stroke="#b0b3b8" stroke-width="0.5"/>
<rect x="779.8" y="79.2" width="10.2" height="9.6" fill="#e2e3e6" stroke="#b0b3b8" stroke-width="0.5"/>
<rect x="779.8" y="88.8" width="10.2" height="9.6" fill="#e2e3e6" stroke="#b0b3b8" stroke-width="0.5"/>
<rect x="779.8" y="98.4" width="10.2" height="9.6" fill="#e2e3e6" stroke="#b0b3b8" stroke-width="0.5"/>
<rect x="779.8" y="108.0" width="10.2" height="9.6" fill="#e2e3e6" stroke="#b0b3b8" stroke-width="0.5"/>
<rect x="779.8" y="117.6" width="10.2" height="9.6" fill="#e2e3e6" stroke="#b0b3b8" stroke-width="0.5"/>
<rect x="779.8" y="127.2" width="10.2" height="11.0" fill="#e2e3e6" stroke="#b0b3b8" stroke-width="0.5"/>

<path d="M781 75 L784.8 71.2 L788.6 75" stroke="#245a88" stroke-width="1.5" fill="none"/><rect x="782.3" y="75" width="5" height="3.2" fill="#8a8a8a"/><rect x="784" y="76.3" width="1.5" height="1.9" fill="#fff"/>
<path d="M781.8 81.5 L784.8 80.3 L787.8 81.5 L787.8 86.8 L784.8 88 L781.8 86.8Z" fill="#9a9a9a" stroke="#666" stroke-width="0.5"/><path d="M781.8 81.5 L784.8 82.7 L787.8 81.5 M784.8 82.7 L784.8 88" stroke="#d8d8d8" stroke-width="0.5" fill="none"/>
<path d="M781 91 L783.5 90 L785 91 L788.2 91 L788.2 96.8 L781 96.8Z" fill="#f2f2f2" stroke="#666" stroke-width="0.6"/><path d="M781 96.8 L782.8 93.3 L789.2 93.3 L788.2 96.8Z" fill="#fafafa" stroke="#666" stroke-width="0.6"/>
<rect x="781.3" y="100.6" width="7" height="5.4" fill="#e0b020" stroke="#7a6a30" stroke-width="0.5"/><rect x="783" y="101.8" width="3.6" height="3" fill="#e8e8e8" stroke="#555" stroke-width="0.4"/>
<circle cx="784.8" cy="110.8" r="3.5" fill="#3070d0"/><path d="M784.8 110.8 L784.8 107.3 A3.5 3.5 0 0 1 788.3 110.8Z" fill="#d03030"/><path d="M784.8 110.8 L788.3 110.8 A3.5 3.5 0 0 1 784.8 114.3Z" fill="#3aa03a"/><path d="M784.8 110.8 L781.3 110.8 A3.5 3.5 0 0 0 784.8 114.3Z" fill="#f0c020"/>
<rect x="781.3" y="117.4" width="7" height="6.5" fill="#e8eef4" stroke="#5a6a7a" stroke-width="0.6"/><rect x="781.3" y="117.4" width="2.2" height="6.5" fill="#2a7ab8"/><path d="M784.2 119.8 L787.8 119.8 M784.2 121.8 L787.8 121.8" stroke="#666" stroke-width="0.5"/>
<path d="M781.2 127.5 L785 127.5 L785 131 L782.5 132.5 L781.2 131Z" fill="#2a8ad0"/><rect x="783.6" y="129.8" width="4.8" height="3.4" rx="1" fill="#f4f4f4" stroke="#666" stroke-width="0.5"/>

<defs>
<linearGradient id="tube" x1="0" x2="1" y1="0" y2="0">
<stop offset="0" stop-color="#3a3a46"/><stop offset="0.07" stop-color="#74709a"/><stop offset="0.3" stop-color="#7e7b9a"/><stop offset="0.55" stop-color="#9598ae"/><stop offset="0.86" stop-color="#a8abc0"/><stop offset="0.92" stop-color="#6a6a7a"/><stop offset="1" stop-color="#3a3a44"/>
</linearGradient>
<linearGradient id="tube2" x1="0" x2="1" y1="0" y2="0">
<stop offset="0" stop-color="#3a3a46"/><stop offset="0.08" stop-color="#8e8aa6"/><stop offset="0.5" stop-color="#a4a6ba"/><stop offset="0.88" stop-color="#b0b3c6"/><stop offset="0.94" stop-color="#3a3a44"/><stop offset="1" stop-color="#2a2a32"/>
</linearGradient>
<radialGradient id="tip" cx="0.55" cy="0.35" r="0.6">
<stop offset="0" stop-color="#ffffff"/><stop offset="0.4" stop-color="#d8d8ec"/><stop offset="1" stop-color="#8a8aa6"/>
</radialGradient>
<linearGradient id="bore" x1="0" x2="0" y1="0" y2="1">
<stop offset="0" stop-color="#3e3e4e"/><stop offset="0.3" stop-color="#56566a"/><stop offset="0.68" stop-color="#a4a4b8"/><stop offset="0.82" stop-color="#e4e4ee"/><stop offset="1" stop-color="#7a7a8c"/>
</linearGradient>
<linearGradient id="nutw" x1="0" x2="1" y1="0" y2="0">
<stop offset="0" stop-color="#c8c8d6"/><stop offset="0.5" stop-color="#f4f4fa"/><stop offset="1" stop-color="#d0d0de"/>
</linearGradient>
<linearGradient id="body" x1="0" x2="1" y1="0" y2="0">
<stop offset="0" stop-color="#7a749e"/><stop offset="0.18" stop-color="#8a86a8"/><stop offset="0.55" stop-color="#9a9ab2"/><stop offset="1" stop-color="#a0a2b6"/>
</linearGradient>
<pattern id="spr" width="20" height="3.2" patternUnits="userSpaceOnUse" x="432" y="195.5">
<rect width="20" height="3.2" fill="#222228"/><path d="M1.5 1.3 L8.5 0.9 M11 1.5 L18.5 1.1" stroke="#8a8a98" stroke-width="0.65"/>
</pattern>
</defs>
<rect x="374" y="133" width="12.8" height="29.7" rx="1.6" fill="#8a8a9a" stroke="#2c2c34" stroke-width="0.6"/>
<rect x="386.5" y="135.7" width="11.5" height="24.8" fill="#85859a" stroke="#2c2c34" stroke-width="0.5"/>
<rect x="396.5" y="138.5" width="15" height="19.2" fill="#a2a2b6" stroke="#2c2c34" stroke-width="0.5"/>
<rect x="374.5" y="141" width="22" height="14.5" fill="url(#bore)"/>
<rect x="396.8" y="141" width="12.5" height="14" fill="#9e9eb2"/><rect x="396.8" y="151" width="12.5" height="2.2" fill="#c8c8d8"/><path d="M396.8 141 L409.3 141 M396.8 155 L409.3 155" stroke="#2c2c34" stroke-width="0.5"/>
<rect x="409.3" y="143.5" width="2" height="9" fill="#d8d8e4"/>
<path d="M374 141 L396.5 141 M374 155.5 L396.5 155.5" stroke="#2c2c34" stroke-width="0.5"/>
<circle cx="376.5" cy="158.5" r="0.7" fill="#2c2c34"/><circle cx="376.5" cy="155" r="0.6" fill="#2c2c34"/>
<path d="M411.5 128 L472.7 146 L472.7 180.4 L462.9 195 L462.9 217 L422.2 217 L422.2 195 L411.8 178.7 Z" fill="url(#body)" stroke="#2c2c34" stroke-width="0.7"/>
<path d="M411.8 178.7 L472.7 180.4 L462.9 195 L462.9 217 L422.2 217 L422.2 195 Z" fill="#8e8ea2" stroke="#2c2c34" stroke-width="0.7"/>
<rect x="431.5" y="158" width="9.5" height="7.5" fill="#8e8ca4" stroke="#2c2c34" stroke-width="0.5"/>
<rect x="442.2" y="158" width="9.5" height="7.5" fill="#8e8ca4" stroke="#2c2c34" stroke-width="0.5"/>
<rect x="415" y="165.3" width="53.3" height="11.8" fill="#8a889e" stroke="#2c2c34" stroke-width="0.6"/>
<rect x="425" y="173.5" width="33" height="3" fill="#6a687e"/>
<rect x="415.8" y="165.5" width="7.8" height="11.5" fill="#a2a0b6" stroke="#2c2c34" stroke-width="0.5"/><rect x="417.5" y="166" width="2" height="11" fill="#c8c6d8"/>
<rect x="458.6" y="165.5" width="9.6" height="11.5" fill="#a2a0b6" stroke="#2c2c34" stroke-width="0.5"/><rect x="461" y="166" width="2" height="11" fill="#c8c6d8"/>
<rect x="418.2" y="177" width="3.2" height="11.3" rx="1.4" fill="#8a889e" stroke="#2c2c34" stroke-width="0.5"/>
<rect x="460.3" y="177" width="3.3" height="11.3" rx="1.4" fill="#8a889e" stroke="#2c2c34" stroke-width="0.5"/>
<path d="M428.8 179.8 L439 179.8 L438.6 195 L430.2 195Z" fill="url(#nutw)" stroke="#2c2c34" stroke-width="0.5"/>
<rect x="438.8" y="179.8" width="5.6" height="15.2" fill="#b4b4c6" stroke="#2c2c34" stroke-width="0.4"/>
<path d="M444.4 179.8 L454.6 179.8 L453.2 195 L444.4 195Z" fill="url(#nutw)" stroke="#2c2c34" stroke-width="0.5"/>
<rect x="432" y="195.4" width="20" height="21.2" fill="url(#spr)" stroke="#1e1e24" stroke-width="0.6"/>
<rect x="454" y="206" width="8" height="0.9" fill="#c0c0cc"/>
<rect x="426.3" y="216.6" width="31.4" height="2.7" fill="#70707e" stroke="#2c2c34" stroke-width="0.5"/>
<rect x="431.5" y="219" width="21.6" height="136.7" fill="url(#tube)"/>
<path d="M431.8 219 L431.8 379 M452.8 219 L452.8 379" stroke="#30303a" stroke-width="0.7"/>
<rect x="451.3" y="280.7" width="1.9" height="75" fill="#1c1c22"/>
<rect x="428.4" y="272" width="3.4" height="2.3" rx="0.6" fill="#9a9aac" stroke="#2c2c34" stroke-width="0.5"/>
<rect x="453" y="272" width="3.6" height="2.3" rx="0.6" fill="#9a9aac" stroke="#2c2c34" stroke-width="0.5"/>
<path d="M431.6 266 L431.6 282 M453 266 L453 282" stroke="#2a2a32" stroke-width="0.9"/>
<rect x="431.8" y="355.7" width="21" height="23.1" fill="url(#tube2)"/>
<path d="M431.8 355.7 L452.8 355.7 M431.8 378.8 L452.8 378.8" stroke="#2a2a32" stroke-width="0.7"/>
<path d="M431.8 378.8 A10.5 10.7 0 0 0 452.8 378.8 Z" fill="url(#tip)" stroke="#2a2a32" stroke-width="0.8"/>
<g transform="translate(442.20 142.90) rotate(16.50) scale(1 -1)">
<path d="M-14.5 35 L-13.2 43.6 L-3.4 44.2 L4.6 44.6 L16 44 L17.6 35 Z" fill="#8e8e9e" stroke="#2c2c34" stroke-width="0.75"/>
<path d="M-41.4 -0.3 L-42.2 21.6 L-38.9 24.3 A48 37 0 0 0 42.6 21.3 L41.4 -0.3 Z" fill="#8e8e9e" stroke="#2c2c34" stroke-width="0.8"/>
<path d="M-14.2 38 L-13.2 43.6 L-3.4 44.2 L4.6 44.6 L16 44 L17.2 38 Z" fill="#8e8e9e"/>
<path d="M-13.2 43.6 L-3.4 44.2 L4.6 44.6 L16 44 L17.4 37" fill="none" stroke="#2c2c34" stroke-width="0.75"/>
<path d="M-3.4 37.8 L4.6 37.8 L4.6 44.8 L-3.4 44.8 Z" fill="#a48cb8" stroke="#2c2c34" stroke-width="0.5"/>
<path d="M-38.6 17.4 A44 30 0 0 0 38.8 17.4 Z" fill="#48465a" stroke="#2a2a34" stroke-width="0.5"/>
<rect x="-39.3" y="8.6" width="78.6" height="8.8" fill="#28282f"/>
<path d="M-39 10.2 L39 10.2 M-39 12.1 L39 12.1 M-39 14 L39 14 M-39 15.8 L39 15.8" stroke="#4e4d5c" stroke-width="0.5" stroke-dasharray="0.9 0.8"/>
<rect x="-39.3" y="17" width="78.6" height="1.1" fill="#c4c2d6"/>
<rect x="-38.5" y="2.8" width="72" height="5.8" fill="#8c88a8"/>
<rect x="-38.5" y="5.4" width="72" height="3.2" fill="#9e9aba"/>
<rect x="-38.5" y="2.2" width="72" height="1.2" fill="#dedcea"/>
<rect x="33.5" y="0" width="5.8" height="8.6" fill="#8a8a9a"/>
<path d="M-39.3 -0.3 L-39.3 21 M39.5 -0.3 L39.5 21" stroke="#2c2c34" stroke-width="0.5"/>
<circle cx="-40.4" cy="2.6" r="1" fill="none" stroke="#2c2c34" stroke-width="0.5"/>
<circle cx="40.3" cy="2.6" r="1" fill="none" stroke="#2c2c34" stroke-width="0.5"/>
</g>

<path d="M116 386.5 L125 386.5" stroke="#2020c8" stroke-width="1.3"/><path d="M124.3 384.6 L128.4 386.5 L124.3 388.4Z" fill="#1a1ab0"/>
<path d="M129 385 L131 385 L129 388 L131 388" stroke="#2a2ad0" stroke-width="0.6" fill="none"/>
<path d="M116.3 386.5 L116.3 395" stroke="#3a9a3a" stroke-width="1.3"/><path d="M114.6 394.4 L116.3 398.4 L118 394.4Z" fill="#1a7a2a"/>
<path d="M115 398.8 L116.3 400.5 L117.6 398.8 M116.3 400.5 L116.3 402.8" stroke="#3a9a3a" stroke-width="0.6" fill="none"/>
<circle cx="116.1" cy="386.5" r="2" fill="#c01818"/>


<rect x="718" y="369" width="34.5" height="17" rx="8.5" fill="#2a2d35"/>
<circle cx="715.4" cy="377.5" r="12" fill="#4a4e58"/>
<circle cx="715.4" cy="377.5" r="11.9" fill="none" stroke="#3c4048" stroke-width="0.4"/>
<path d="M716 366.8 A10.7 10.7 0 0 1 724.9 382.5" stroke="#4ac0a0" stroke-width="0.9" fill="none"/>
<circle cx="730.4" cy="373.2" r="0.9" fill="#40a8e8"/><circle cx="730.4" cy="381.8" r="0.9" fill="#30b040"/>
</svg>
<div class="t" style="left:708.6px;top:373.2px;font-size:10.2px;line-height:10px;color:#e8eaee;letter-spacing:-0.6px">35<span style="font-size:4.2px;letter-spacing:0">%</span></div>
<div class="t" style="left:739.2px;top:371.2px;font-size:4.1px;line-height:5px;color:#c8cad0">0K/s</div>
<div class="t" style="left:739.2px;top:379.9px;font-size:4.1px;line-height:5px;color:#c8cad0">0K/s</div>
<div id="btabs" class="a"></div>
<div class="a" style="left:0;top:409.9px;width:27px;height:6px;background:#acacac"></div>
<svg class="a" style="left:0;top:0" width="790" height="444"><path d="M4.5 411.7 L3 412.9 L4.5 414.1Z M9.5 411.7 L8 412.9 L9.5 414.1Z M15 411.7 L16.5 412.9 L15 414.1Z M21 411.7 L22.5 412.9 L21 414.1Z" fill="#d0d0d0"/></svg>
<div class="a" style="left:27px;top:409.9px;width:20px;height:6px;background:#fdfdfd;font-size:5px;line-height:6px;text-align:center;color:#111;-webkit-text-stroke:0.15px #222">模型</div>
<div class="a" style="left:47px;top:409.9px;width:24.5px;height:6px;background:#dcdcdc;border-left:0.6px solid #a8a8a8;border-right:0.6px solid #a8a8a8;font-size:5px;line-height:6px;text-align:center;color:#111;white-space:nowrap;-webkit-text-stroke:0.1px #222">3D 视图</div>
<div class="a" style="left:71.5px;top:409.9px;width:34.7px;height:6px;background:#dcdcdc;border-right:0.6px solid #a8a8a8;font-size:5px;line-height:6px;text-align:center;color:#111;white-space:nowrap;-webkit-text-stroke:0.1px #222">运动算例1</div>
<div id="status" class="a"></div>
<div class="t" style="left:1px;top:417.9px;font-size:5px;line-height:7px;color:#222">SOLIDWORKS Premium 2019 SP0.0</div>
<div class="t" style="left:656px;top:417.9px;font-size:4.8px;line-height:7px;color:#222">欠定义</div>
<div class="t" style="left:677.6px;top:417.9px;font-size:4.8px;line-height:7px;color:#222">在编辑 装配体</div>
<div class="t" style="left:730px;top:417.9px;font-size:4.8px;line-height:7px;color:#222">MMGS</div>
<svg class="a" style="left:0;top:0" width="790" height="444"><rect x="673.6" y="417.5" width="0.5" height="6" fill="#d0d0d0"/><rect x="712" y="417.5" width="0.5" height="6" fill="#d0d0d0"/><rect x="718.7" y="417.5" width="0.5" height="6" fill="#d0d0d0"/><rect x="753" y="420" width="1" height="1" fill="#333"/><ellipse cx="784.3" cy="419.8" rx="2.6" ry="1.9" fill="#f0f0f0" stroke="#666" stroke-width="0.6"/><path d="M783 421.5 L782.5 423" stroke="#666" stroke-width="0.6"/></svg>
<div id="taskbar" class="a"></div>
<svg class="a" style="left:0;top:0" width="790" height="444"><rect x="6.4" y="429" width="10.4" height="9.9" rx="1.6" fill="#1a78d8"/><rect x="7.7" y="430.4" width="3.4" height="7.2" fill="#fafafa"/><rect x="11.6" y="430.4" width="4" height="7.2" fill="#30a8f0"/><rect x="263.8" y="429.6" width="4.5" height="4.4" fill="#1a8ee0"/><rect x="268.8" y="429.6" width="4.5" height="4.4" fill="#1a8ee0"/><rect x="263.8" y="434.4" width="4.5" height="4.4" fill="#1a8ee0"/><rect x="268.8" y="434.4" width="4.5" height="4.4" fill="#1a8ee0"/><circle cx="287.8" cy="433.2" r="3.3" fill="none" stroke="#222" stroke-width="1"/><path d="M285.4 435.8 L282.8 438.6" stroke="#222" stroke-width="1.2"/><rect x="302.5" y="429.6" width="6.5" height="6.8" fill="#e8e8e8" stroke="#999" stroke-width="0.4"/><rect x="299.8" y="432.3" width="6.5" height="6.5" fill="#1e1e1e"/><circle cx="323" cy="434" r="5" fill="#1a7ad0"/><path d="M319 434 C319 430.5 327 430 327.8 434.5 L322 434.5 C322 436.5 325 437.5 327.5 436.5 C326 439 320 439.5 319 434Z" fill="#5ad0f0"/><circle cx="323.5" cy="433.5" r="1.6" fill="#1a7ad0"/><rect x="336.3" y="430" width="9.9" height="8.6" rx="0.8" fill="#f5c030"/><rect x="336.3" y="430" width="4" height="2" fill="#e0a020"/><rect x="338" y="434.8" width="6.5" height="1.5" fill="#2a7ad0"/><rect x="340" y="440.8" width="2" height="0.8" fill="#555"/><rect x="353.8" y="430.2" width="10.3" height="8.4" rx="0.8" fill="#1a7ad0"/><path d="M353.8 432.5 L359 435.5 L364.1 432.5" stroke="#fff" stroke-width="0.9" fill="none"/><rect x="372.3" y="430.2" width="9.4" height="8.8" rx="1" fill="#1a4a8a"/><rect x="375" y="432.8" width="1.8" height="1.8" fill="#f04a20"/><rect x="377.2" y="432.8" width="1.8" height="1.8" fill="#80c020"/><rect x="375" y="435" width="1.8" height="1.8" fill="#20a0f0"/><rect x="377.2" y="435" width="1.8" height="1.8" fill="#ffb800"/><circle cx="395.3" cy="434" r="5.2" fill="#2a8ae0"/><circle cx="395" cy="433.8" r="3" fill="#e8f4fc"/><path d="M392 438 C395 435 398 436 400.5 437.5 C398 440 393 440 392 438Z" fill="#f8f8f8"/><circle cx="413.4" cy="434" r="4.4" fill="#5ab820"/><path d="M409 433 C411 431 416 431 418 433" stroke="#e8f8d8" stroke-width="1" fill="none"/><path d="M410 438.5 C408 436 409 431 413 429.8" stroke="#8ad850" stroke-width="0.8" fill="none"/><rect x="412.4" y="440.8" width="2" height="0.8" fill="#555"/><circle cx="431.4" cy="434" r="4.5" fill="none" stroke="#e040a0" stroke-width="2.6"/><path d="M431.4 429.5 A4.5 4.5 0 0 1 435.9 434" stroke="#f0c020" stroke-width="2.6" fill="none"/><path d="M435.9 434 A4.5 4.5 0 0 1 431.4 438.5" stroke="#40c040" stroke-width="2.6" fill="none"/><path d="M431.4 438.5 A4.5 4.5 0 0 1 426.9 434" stroke="#20a0f0" stroke-width="2.6" fill="none"/><rect x="430.4" y="440.8" width="2" height="0.8" fill="#555"/><circle cx="449.7" cy="434" r="5" fill="#db4437"/><path d="M449.7 434 L445.4 436.5 A5 5 0 0 0 454.5 435.3Z" fill="#0f9d58"/><path d="M449.7 434 L454.5 435.3 A5 5 0 0 0 454 431.5 L449.7 429Z" fill="#f4b400"/><circle cx="449.7" cy="434" r="2.3" fill="#fff"/><circle cx="449.7" cy="434" r="1.7" fill="#4285f4"/><rect x="448.7" y="440.8" width="2" height="0.8" fill="#555"/><rect x="463.8" y="429.8" width="8.3" height="8.5" fill="#3a9ad8"/><rect x="464.2" y="430.5" width="7.5" height="6.8" fill="#6ab8e8"/><rect x="463.8" y="437.6" width="8.3" height="1" fill="#c8602a"/><rect x="467" y="440.8" width="2" height="0.8" fill="#555"/><rect x="481" y="429.5" width="10" height="9.5" rx="2" fill="#21b04a"/><path d="M483.5 432.5 L488.5 432.5 M483.5 434.3 L488.5 434.3 M483.5 436.2 L488.5 436.2" stroke="#e8f8ea" stroke-width="0.8"/><rect x="485" y="440.8" width="2" height="0.8" fill="#555"/><rect x="499" y="429.5" width="9.7" height="9.5" rx="2" fill="#3a9af0"/><path d="M501 432 L502.5 436.5 L503.8 433.5 L505 436.5 L506.6 432" stroke="#fff" stroke-width="0.9" fill="none"/><rect x="502.8" y="440.8" width="2" height="0.8" fill="#555"/><rect x="514.2" y="426.2" width="15.5" height="16.5" rx="1.2" fill="#e6eef6"/><rect x="516.8" y="429.5" width="10.6" height="9.5" rx="0.8" fill="#c02030"/><path d="M516.8 432 L522 429.5 L527.4 432" fill="#e84050"/><rect x="521" y="433.5" width="5.5" height="4.5" fill="#d0d0d0" opacity="0.7"/><rect x="519.3" y="440.8" width="5.5" height="1.2" rx="0.6" fill="#1a6ad0"/><path d="M676 435.7 L678.5 432.8 L681 435.7" stroke="#222" stroke-width="0.8" fill="none"/><rect x="684.9" y="431" width="6.4" height="6.4" rx="1.2" fill="#1a7ad0"/><path d="M687 432.5 L689.5 435.5" stroke="#fff" stroke-width="1"/><path d="M694.3 431.3 L697.8 430.4 L701.2 431.3 L701.2 434 C701.2 436.5 699 438 697.8 438.5 C696.6 438 694.3 436.5 694.3 434Z" fill="#5a6ad8"/><rect x="737.2" y="430.8" width="6" height="4.6" fill="none" stroke="#222" stroke-width="0.8"/><path d="M740.2 435.4 L740.2 437.5 M738 437.8 L742.5 437.8" stroke="#222" stroke-width="0.8"/><path d="M747 433 L748.3 433 L750 431.5 L750 436.5 L748.3 435 L747 435Z" fill="#222"/><path d="M751 432.5 A2 2 0 0 1 751 435.5 M752 431.5 A3.5 3.5 0 0 1 752 436.5" stroke="#222" stroke-width="0.5" fill="none"/></svg>
<div class="t" style="left:705.5px;top:429.5px;font-size:6.8px;line-height:9px;color:#444">英</div>
<div class="t" style="left:721.5px;top:429.5px;font-size:6.8px;line-height:9px;color:#444">拼</div>
<div class="t" style="left:771.3px;top:429.2px;font-size:4.6px;line-height:5px;color:#222">15:51</div>
<div class="t" style="left:759.8px;top:435.4px;font-size:4.6px;line-height:5px;color:#222">2022/8/15</div>
<div class="a" style="left:788.9px;top:410px;width:1.1px;height:6.5px;background:#6f9fd0"></div>
</body></html>
